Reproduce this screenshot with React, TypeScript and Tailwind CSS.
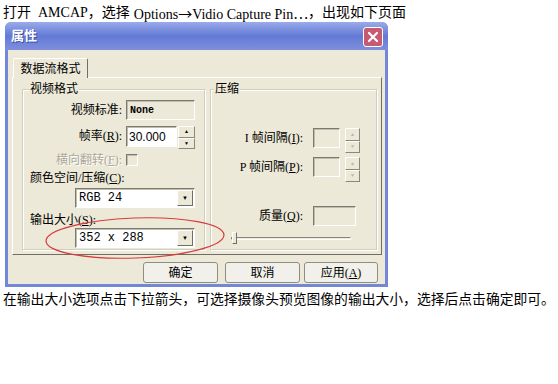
const font = { fontFamily: '"Liberation Serif", "Noto Sans CJK SC", serif' };
const cjk = { fontFamily: '"Noto Sans CJK SC", sans-serif' };

function Spin({ disabled = false, h = 'h-[23px]' }: { disabled?: boolean; h?: string }) {
  const arrow = disabled ? 'text-[#b8b6a8]' : 'text-black';
  return (
    <div className={`flex flex-col w-full ${h}`}>
      {['▲', '▼'].map((a) => (
        <div
          key={a}
          className={`flex-1 flex items-center justify-center bg-[#ece9d8] border border-t-white border-l-white border-b-[#8a887a] border-r-[#8a887a] text-[5px] leading-none ${arrow}`}
        >
          {a}
        </div>
      ))}
    </div>
  );
}

function Combo({ value }: { value: string }) {
  return (
    <div className="ml-[52px] w-[120px] h-[20px] flex items-center bg-white border border-t-[#7b7a70] border-l-[#7b7a70] border-b-white border-r-white shadow-[inset_1px_1px_0_#c0bdae]">
      <span className="flex-1 pl-[3px] text-[12px] text-black" style={{ fontFamily: '"Liberation Mono", monospace' }}>
        {value}
      </span>
      <div className="w-[16px] h-[16px] mr-[1px] flex items-center justify-center bg-[#ece9d8] border border-t-white border-l-white border-b-[#716f64] border-r-[#716f64] text-[6px]">
        ▼
      </div>
    </div>
  );
}

const sunken = 'border border-t-[#7b7a70] border-l-[#7b7a70] border-b-white border-r-white shadow-[inset_1px_1px_0_#c0bdae]';

export default function App() {
  return (
    <div className="w-[558px] h-[384px] bg-white relative overflow-hidden text-black" style={font}>
      {/* top caption */}
      <div className="pl-[3px] pt-[4px] h-[22px] flex text-[14px] leading-[18px] whitespace-nowrap">
        <span>打开</span>
        <span className="ml-[7px]">AMCAP</span>
        <span>，选择</span>
        <span className="ml-[4px]">
          Options<span style={cjk}>→</span>Vidio Capture Pin<span style={cjk}>…</span>
        </span>
        <span>，出现如下页面</span>
      </div>

      <div className="ml-[5px] w-[383px] h-[265px] flex flex-col rounded-t-[6px] bg-[#7387d9] px-[3px] pb-[3px]">
        {/* title bar */}
        <div className="h-[28px] -mx-[3px] px-[5px] flex items-center justify-between rounded-t-[6px] bg-gradient-to-b from-[#9aabea] via-[#6479d5] to-[#7d8fdc]">
          <span className="text-white font-bold text-[13px] pl-[1px] [text-shadow:1px_1px_0_#3c4fa8]">属性</span>
          <div className="w-[20px] h-[20px] mt-[1px] rounded-[3px] border border-white bg-[#c65a73] flex items-center justify-center">
            <svg width="12" height="12" viewBox="0 0 12 12">
              <path d="M2 2 L10 10 M10 2 L2 10" stroke="white" strokeWidth="2.2" strokeLinecap="round" />
            </svg>
          </div>
        </div>

        {/* body */}
        <div className="flex-1 bg-[#ece9d8] flex flex-col text-[12px]">
          <div className="pl-[5px] pt-[8px]">
            <div className="w-[75px] h-[20px] flex items-center justify-center border-t border-l border-white border-r border-r-[#716f64] rounded-t-[2px] relative z-10 bg-[#ece9d8]">
              数据流格式
            </div>
          </div>

          <div className="ml-[4px] w-[370px] h-[178px] -mt-px border border-t-white border-l-white border-b-[#716f64] border-r-[#716f64] flex items-start pl-[9px] pt-[11px] gap-[5px]">
            {/* 视频格式 */}
            <div className="relative w-[183px] h-[161px] border border-[#d0cebf] shadow-[inset_1px_1px_0_#fff,1px_1px_0_#fff]">
              <span className="absolute -top-[9px] left-[6px] px-[1px] bg-[#ece9d8] leading-[16px]">视频格式</span>

              <div className="pt-[10px] flex items-center">
                <span className="w-[99px] text-right leading-[20px]">视频标准:</span>
                <div className={`ml-[4px] w-[69px] h-[20px] flex items-center pl-[3px] bg-[#ece9d8] ${sunken}`}>
                  <span className="text-[10px] font-bold" style={{ fontFamily: '"Liberation Mono", monospace' }}>None</span>
                </div>
              </div>

              <div className="mt-[6px] flex items-start">
                <span className="w-[99px] text-right leading-[21px]">
                  帧率(<u>R</u>):
                </span>
                <div className={`ml-[4px] w-[51px] h-[21px] flex items-center pl-[2px] bg-white ${sunken}`}>
                  <span className="text-[12px]" style={{ fontFamily: '"Liberation Sans", sans-serif' }}>30.000</span>
                </div>
                <div className="ml-[1px] w-[17px]">
                  <Spin />
                </div>
              </div>

              <div className="mt-[5px] flex items-center h-[12px]">
                <span className="w-[99px] text-right text-[#aca899] [text-shadow:1px_1px_0_#fff] leading-[12px]">
                  横向翻转(<u>F</u>):
                </span>
                <div className={`ml-[4px] w-[12px] h-[12px] bg-[#ece9d8] ${sunken}`} />
              </div>

              <p className="mt-[4px] pl-[7px] leading-[16px]">
                颜色空间/压缩(<u>C</u>):
              </p>
              <div className="mt-[2px]">
                <Combo value="RGB 24" />
              </div>
              <p className="mt-[4px] pl-[7px] leading-[16px]">
                输出大小(<u>S</u>):
              </p>
              <Combo value="352 x 288" />
            </div>

            {/* 压缩 */}
            <div className="relative w-[167px] h-[161px] border border-[#d0cebf] shadow-[inset_1px_1px_0_#fff,1px_1px_0_#fff]">
              <span className="absolute -top-[9px] left-[3px] px-[1px] bg-[#ece9d8] leading-[16px]">压缩</span>

              <div className="pt-[38px] flex items-start">
                <span className="w-[92px] text-right leading-[20px]">
                  I 帧间隔(<u>I</u>):
                </span>
                <div className={`ml-[10px] w-[27px] h-[20px] bg-[#ece9d8] ${sunken}`} />
                <div className="ml-[5px] w-[15px]">
                  <Spin disabled h="h-[25px]" />
                </div>
              </div>

              <div className="mt-[4px] flex items-start">
                <span className="w-[92px] text-right leading-[20px]">
                  P 帧间隔(<u>P</u>):
                </span>
                <div className={`ml-[10px] w-[27px] h-[20px] bg-[#ece9d8] ${sunken}`} />
                <div className="ml-[5px] w-[15px]">
                  <Spin disabled h="h-[25px]" />
                </div>
              </div>

              <div className="mt-[24px] flex items-center">
                <span className="w-[92px] text-right leading-[20px]">
                  质量(<u>Q</u>):
                </span>
                <div className={`ml-[10px] w-[43px] h-[20px] bg-[#ece9d8] ${sunken}`} />
              </div>

              <div className="mt-[6px] ml-[20px] w-[120px] h-[12px] flex items-center relative">
                <div className="w-full h-[3px] border border-t-[#8a887a] border-l-[#8a887a] border-b-white border-r-white" />
                <div className="absolute left-[1px] top-0 w-[5px] h-[12px] bg-[#ece9d8] border border-t-white border-l-white border-b-[#716f64] border-r-[#716f64]" />
              </div>
            </div>
          </div>

          {/* buttons */}
          <div className="mt-[7px] flex">
            <button className="ml-[135px] w-[75px] h-[21px] rounded-[3px] border border-[#8f8d80] bg-[#f1f0ea] text-[12px]">确定</button>
            <button className="ml-[7px] w-[75px] h-[21px] rounded-[3px] border border-[#8f8d80] bg-[#f1f0ea] text-[12px]">取消</button>
            <button className="ml-[4px] w-[74px] h-[21px] rounded-[3px] border border-[#8f8d80] bg-[#f1f0ea] text-[12px]">
              应用(<u>A</u>)
            </button>
          </div>
        </div>
      </div>

      <p className="pl-[3px] mt-[4px] text-[13.8px] leading-[18px]">
        在输出大小选项点击下拉箭头，可选择摄像头预览图像的输出大小，选择后点击确定即可。
      </p>

      {/* red ellipse highlight */}
      <svg className="absolute left-[43px] top-[215px]" width="184" height="46" viewBox="0 0 184 46">
        <ellipse cx="92" cy="23" rx="89" ry="20" fill="none" stroke="#d83c3c" strokeWidth="1.2" transform="rotate(-2 92 23)" />
      </svg>
    </div>
  );
}
